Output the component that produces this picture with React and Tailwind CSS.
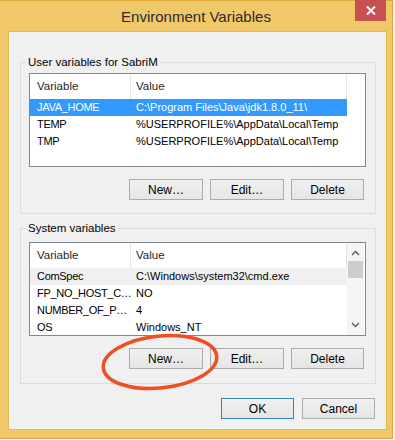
import React from "react";

const font = { fontFamily: '"Liberation Sans", Arial, sans-serif' };

function Btn({ children, primary, w = "w-[74px]" }) {
  return (
    <div
      className={`${w} h-[21px] flex items-center justify-center text-[12px] text-black bg-gradient-to-b from-[#f0f0f0] to-[#e5e5e5] border ${
        primary ? "border-[#3c7fb1]" : "border-[#acacac]"
      }`}
    >
      {children}
    </div>
  );
}

function Row({ name, value, variant }) {
  const bg =
    variant === "sel"
      ? "bg-[#3399ff] text-white"
      : variant === "hover"
      ? "bg-[#f0f0f0] text-black"
      : "text-black";
  return (
    <div className={`flex h-[17px] items-center w-[317px] shrink-0 text-[11px] ${bg}`}>
      <div className="w-[101px] shrink-0 pl-[7px] whitespace-nowrap tracking-[-0.3px]">{name}</div>
      <div className="flex-1 pl-[5px] whitespace-nowrap">{value}</div>
    </div>
  );
}

function Header() {
  return (
    <div className="flex h-[25px] items-center w-[317px] shrink-0 text-[11.5px] text-[#1e1e1e]">
      <div className="w-[101px] pl-[7px] h-full flex items-center border-r border-[#e5e5e5]">Variable</div>
      <div className="flex-1 pl-[5px] h-full flex items-center border-r border-[#e5e5e5]">Value</div>
    </div>
  );
}

function Group({ title, children }) {
  return (
    <fieldset className="border border-[#dcdcdc] pl-[8px] pr-[9px]">
      <legend className="ml-[-3px] px-[2px] text-[11.5px] leading-[16px] text-black">{title}</legend>
      {children}
    </fieldset>
  );
}

export default function App() {
  return (
    <div className="relative w-[395px] h-[440px] bg-[#f7f3ea] text-[12px]" style={font}>
      <div className="w-[393px] h-[439px] bg-[#f0c86a] border-t border-r border-b border-[#dca93a] flex flex-col">
        {/* title bar */}
        <div className="relative h-[30px] shrink-0 flex items-center justify-center">
          <span className="text-[15px] text-[#2b2b2b] mt-[2px]">Environment Variables</span>
          <div className="absolute top-[-1px] right-[6px] w-[31px] h-[21px] bg-[#c75050] flex items-center justify-center">
            <svg width="10" height="9" viewBox="0 0 10 9">
              <path d="M1 0.5 L9 8.5 M9 0.5 L1 8.5" stroke="white" strokeWidth="2" />
            </svg>
          </div>
        </div>

        {/* client */}
        <div className="ml-[8px] w-[379px] h-[399px] bg-[#f0f0f0] border border-[#e2b955] pl-[11px] pr-[10px] pt-[22px] flex flex-col">
          <Group title="User variables for SabriM">
            <div className="mt-[3px] h-[94px] border border-[#828790] bg-white flex flex-col overflow-hidden">
              <Header />
              <Row name="JAVA_HOME" value="C:\Program Files\Java\jdk1.8.0_11\" variant="sel" />
              <Row name="TEMP" value="%USERPROFILE%\AppData\Local\Temp" />
              <Row name="TMP" value="%USERPROFILE%\AppData\Local\Temp" />
            </div>
            <div className="mt-[12px] mb-[13px] flex justify-end gap-[7px] pr-[2px]">
              <Btn>New…</Btn>
              <Btn>Edit…</Btn>
              <Btn w="w-[73px]">Delete</Btn>
            </div>
          </Group>

          <div className="mt-[6px]">
            <Group title="System variables">
              <div className="mt-[6px] h-[94px] border border-[#828790] bg-white flex overflow-hidden">
                <div className="flex flex-col overflow-hidden">
                  <Header />
                  <Row name="ComSpec" value="C:\Windows\system32\cmd.exe" variant="hover" />
                  <Row name="FP_NO_HOST_C…" value="NO" />
                  <Row name="NUMBER_OF_P…" value="4" />
                  <Row name="OS" value="Windows_NT" />
                </div>
                <div className="w-[17px] shrink-0 bg-[#f5f5f5] flex flex-col items-center">
                  <svg className="mt-[7px]" width="9" height="6" viewBox="0 0 9 6">
                    <path d="M1 5 L4.5 1.5 L8 5" stroke="#606060" strokeWidth="1.5" fill="none" />
                  </svg>
                  <div className="mt-[5px] w-[15px] h-[17px] bg-[#cdcdcd]" />
                  <div className="flex-1" />
                  <svg className="mb-[7px]" width="9" height="6" viewBox="0 0 9 6">
                    <path d="M1 1 L4.5 4.5 L8 1" stroke="#606060" strokeWidth="1.5" fill="none" />
                  </svg>
                </div>
              </div>
              <div className="mt-[12px] mb-[14px] flex justify-end gap-[7px] pr-[2px]">
                <Btn>New…</Btn>
                <Btn>Edit…</Btn>
                <Btn w="w-[73px]">Delete</Btn>
              </div>
            </Group>
          </div>

          <div className="mt-[14px] flex justify-end gap-[8px] pr-[1px]">
            <Btn primary w="w-[73px]">OK</Btn>
            <Btn w="w-[73px]">Cancel</Btn>
          </div>
        </div>
      </div>

      {/* annotation */}
      <svg className="absolute left-0 top-0 pointer-events-none" width="395" height="440">
        <ellipse
          cx="160"
          cy="362"
          rx="57"
          ry="26"
          transform="rotate(-6 160 362)"
          fill="none"
          stroke="#f04e23"
          strokeWidth="3.5"
        />
      </svg>
    </div>
  );
}
